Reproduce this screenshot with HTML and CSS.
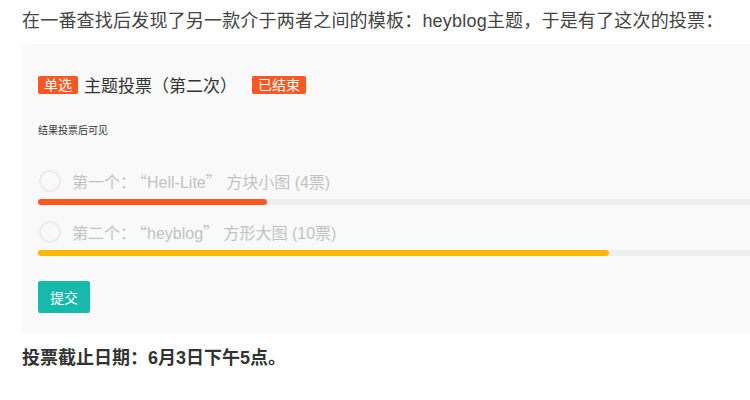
FILE: index.html
```html
<!DOCTYPE html>
<html lang="zh-CN">
<head>
<meta charset="utf-8">
<title>投票</title>
<link rel="stylesheet" href="styles.css">
</head>
<body>
<div class="page">
  <p class="intro">在一番查找后发现了另一款介于两者之间的模板：heyblog主题，于是有了这次的投票：</p>
  <div class="vote-card">
    <div class="vote-head">
      <span class="badge">单选</span>
      <span class="vote-title">主题投票（第二次）</span>
      <span class="badge badge-end">已结束</span>
    </div>
    <div class="vote-note">结果投票后可见</div>
    <div class="option">
      <span class="radio"></span>
      <span class="option-text">第一个：<span class="q q-open">“</span>Hell-Lite<span class="q">”</span> 方块小图 (4票)</span>
    </div>
    <div class="track"><div class="fill fill-orange" style="width:28.57%"></div></div>
    <div class="option option-second">
      <span class="radio"></span>
      <span class="option-text">第二个：<span class="q q-open">“</span>heyblog<span class="q">”</span> 方形大图 (10票)</span>
    </div>
    <div class="track"><div class="fill fill-yellow" style="width:71.43%"></div></div>
    <button class="submit" type="button">提交</button>
  </div>
  <p class="deadline">投票截止日期：6月3日下午5点。</p>
</div>
</body>
</html>
```

FILE: styles.css
```css
html, body {
  margin: 0;
  padding: 0;
  overflow: hidden;
  background: #fff;
}

body {
  font-family: "Liberation Sans", "Noto Sans CJK SC", sans-serif;
  color: #333;
}

.page {
  padding-left: 22px;
  width: 900px;
}

.intro {
  margin: 6px 0 8px;
  font-size: 18px;
  line-height: 30px;
  letter-spacing: 0.2px;
  color: #444;
  white-space: nowrap;
}

.vote-card {
  width: 832px;
  box-sizing: border-box;
  background: #f9f9f9;
  border-radius: 5px;
  padding: 31px 16px 21px;
}

.vote-head {
  display: flex;
  align-items: center;
  height: 19px;
}

.badge {
  display: inline-block;
  height: 18px;
  line-height: 18px;
  padding: 0 6px;
  font-size: 14px;
  color: #fff;
  background: #ff5722;
  border-radius: 2px;
}

.vote-title {
  font-size: 17px;
  color: #333;
  margin-left: 6px;
  margin-right: 15px;
}

.vote-note {
  margin-top: 29px;
  font-size: 10px;
  line-height: 16px;
  color: #333;
}

.option {
  display: flex;
  align-items: center;
  height: 22px;
  margin-top: 31px;
}

.option-second {
  margin-top: 16px;
}

.radio {
  width: 18px;
  height: 18px;
  border: 2px solid #ececec;
  border-radius: 50%;
  margin-left: 1px;
  flex: none;
}

.option-text {
  margin-left: 11px;
  font-size: 16px;
  color: #c2c2c2;
  white-space: nowrap;
}

.q {
  font-family: "Noto Sans CJK SC", sans-serif;
  font-feature-settings: "fwid" 1;
}

.q-open {
  margin-left: 3px;
}

.track {
  margin-top: 7px;
  height: 6px;
  background: #eee;
}

.fill {
  height: 100%;
  border-radius: 3px;
}

.fill-orange {
  background: #ff5722;
}

.fill-yellow {
  background: #ffb800;
}

.submit {
  display: block;
  margin-top: 25px;
  width: 52px;
  height: 32px;
  border: 0;
  border-radius: 2px;
  background: #16baaa;
  color: #fff;
  font-family: "Liberation Sans", "Noto Sans CJK SC", sans-serif;
  font-size: 14px;
  padding: 0;
}

.deadline {
  margin: 14px 0 0;
  font-size: 18px;
  line-height: 20px;
  font-weight: bold;
  color: #333;
}
```
